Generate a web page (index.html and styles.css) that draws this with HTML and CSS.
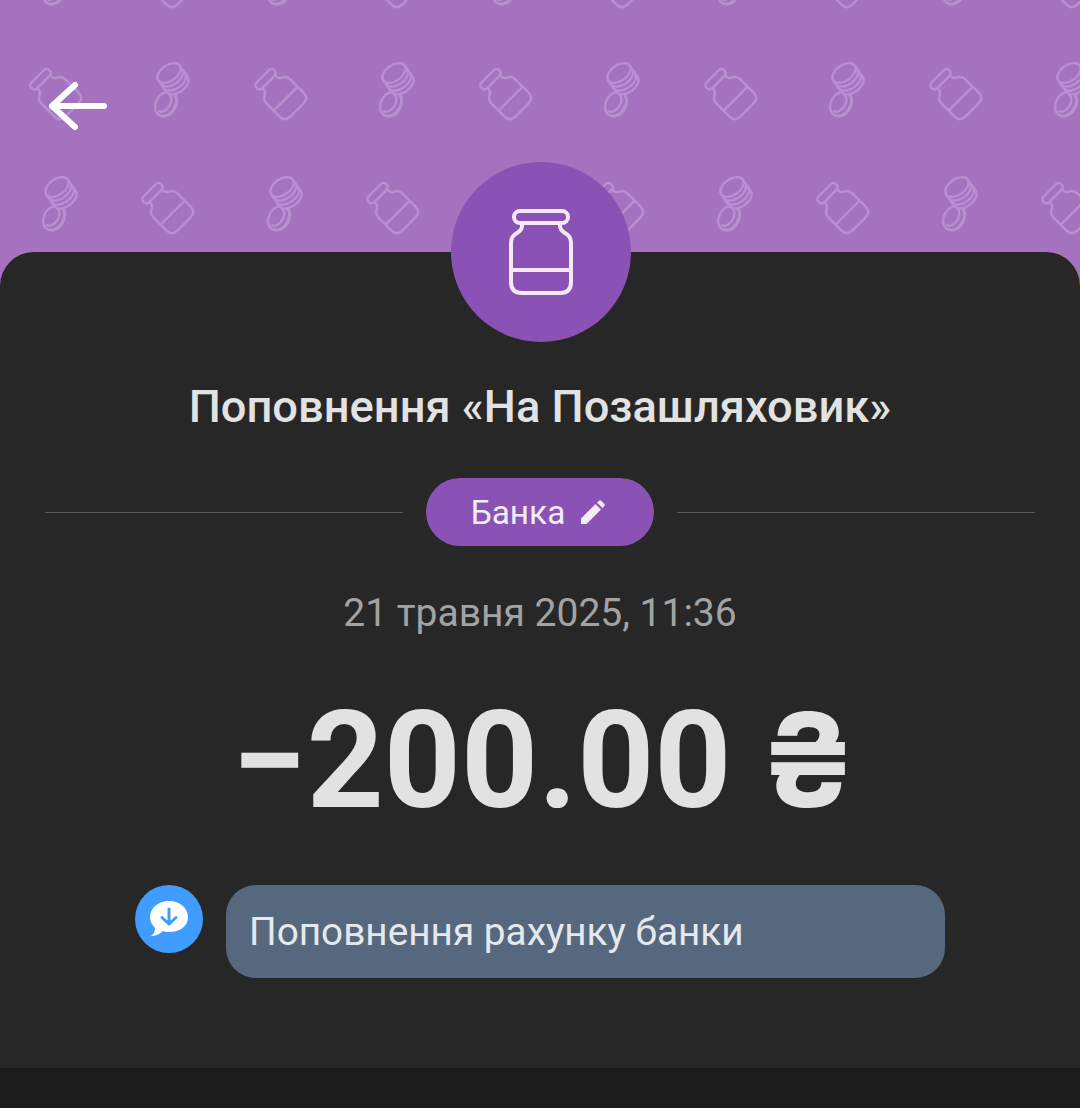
FILE: index.html
```html
<!DOCTYPE html>
<html lang="uk">
<head>
    <meta charset="UTF-8">
    <meta name="viewport" content="width=device-width, initial-scale=1.0">
    <title>Поповнення</title>
    <link rel="stylesheet" href="styles.css">
</head>
<body>
    <svg class="pattern" width="1080" height="300" aria-hidden="true">
        <defs>
            <g id="jar">
                <rect x="-13" y="-24" width="25" height="8" rx="3.5"/>
                <path d="M-9 -16 V-14 Q-9 -11 -13 -9 Q-17 -7 -17 -2 V16 Q-17 24 -9 24 H9 Q17 24 17 16 V-2 Q17 -7 13 -9 Q9 -11 9 -14 V-16"/>
                <path d="M-17 8 H17"/>
            </g>
            <g id="coins" class="coins">
                <g transform="translate(-6 11) rotate(-58)">
                    <ellipse rx="13" ry="10"/>
                    <path class="coin-line" d="M-10 -3 A10 7 0 0 0 10 -3"/>
                    <path class="coin-line" d="M-12 2 A12 7 0 0 0 12 2"/>
                </g>
                <g transform="translate(-3 -20) rotate(-35)">
                    <path d="M-13 0 V14 A13 8 0 0 0 13 14 V0"/>
                    <ellipse rx="13" ry="8"/>
                    <path class="coin-line" d="M-13 4.5 A13 8 0 0 0 13 4.5"/>
                    <path class="coin-line" d="M-13 9.5 A13 8 0 0 0 13 9.5"/>
                </g>
            </g>
            <pattern id="tile" width="225" height="226" patternUnits="userSpaceOnUse" x="0" y="-20">
                <g class="pattern-mark">
                    <use href="#jar" transform="translate(55 113) rotate(-45)"/>
                    <use href="#coins" transform="translate(172 113)"/>
                    <use href="#coins" transform="translate(60 227)"/>
                    <use href="#coins" transform="translate(60 1)"/>
                    <use href="#jar" transform="translate(167 227) rotate(-45)"/>
                    <use href="#jar" transform="translate(167 1) rotate(-45)"/>
                </g>
            </pattern>
        </defs>
        <rect width="1080" height="300" fill="url(#tile)"/>
    </svg>

    <header class="top">
        <button class="back" aria-label="Назад">
            <svg width="60" height="50" viewBox="0 0 60 50">
                <path d="M3 25 H55 M26 4 L3 25 L26 46"/>
            </svg>
        </button>
    </header>

    <main class="sheet">
        <div class="avatar">
            <svg width="70" height="92" viewBox="0 0 70 92">
                <rect x="8" y="5" width="54" height="12" rx="6"/>
                <path d="M16 17 V20 Q16 24 11 27 Q5 30 5 37 V76 Q5 87 16 87 H54 Q65 87 65 76 V37 Q65 30 59 27 Q54 24 54 20 V17"/>
                <path d="M5 64 H65"/>
            </svg>
        </div>

        <h1 class="title">Поповнення «На Позашляховик»</h1>

        <div class="category">
            <span class="line"></span>
            <div class="chip">
                <span>Банка</span>
                <svg width="24" height="24" viewBox="0 0 24 24">
                    <path d="M0 24 V18.5 L14.5 4 L20 9.5 L5.5 24 Z M16 2.5 L18 .7 Q19 -.2 20.2 .7 L23.3 3.8 Q24.2 5 23.3 6 L21.5 8 Z"/>
                </svg>
            </div>
            <span class="line"></span>
        </div>

        <div class="date">21 травня 2025, 11:36</div>

        <div class="amount">−200.00 <span class="currency">₴</span></div>

        <div class="comment">
            <div class="comment-icon">
                <svg width="40" height="38" viewBox="0 0 40 38">
                    <path class="bubble" d="M20 1 C31 1 39 8 39 17 C39 26 31 32 20 32 C18 32 16 32 14 31 C11 34 7 36 2 36 C5 34 6 31 6 28 C3 25 1 21 1 17 C1 8 9 1 20 1 Z"/>
                    <path class="arrow" d="M20 9 V24 M13 17.5 L20 24 L27 17.5"/>
                </svg>
            </div>
            <div class="comment-text">Поповнення рахунку банки</div>
        </div>
    </main>

    <div class="bottom"></div>
</body>
</html>
```

FILE: styles.css
```css
* {
    box-sizing: border-box;
}
html, body {
    margin: 0;
    height: 100%;
}
body {
    position: relative;
    display: flex;
    flex-direction: column;
    width: 1080px;
    height: 1108px;
    overflow: hidden;
    background-color: #a572bf;
    font-family: Roboto, "Noto Sans", sans-serif;
}
.pattern {
    position: absolute;
    top: 0;
    left: 0;
}
.pattern-mark {
    fill: none;
    stroke: #b88fd0;
    stroke-width: 2.4;
}
.coins {
    fill: #a572bf;
}
.coin-line {
    fill: none;
}
.top {
    position: relative;
    height: 252px;
    padding: 81px 0 0 49px;
}
.back {
    display: block;
    padding: 0;
    border: 0;
    background: none;
}
.back svg {
    display: block;
    fill: none;
    stroke: #fff;
    stroke-width: 6;
    stroke-linecap: round;
    stroke-linejoin: round;
}
.sheet {
    position: relative;
    display: flex;
    flex-direction: column;
    align-items: center;
    height: 816px;
    background-color: #272727;
    border-radius: 34px 34px 0 0;
}
.avatar {
    display: flex;
    align-items: center;
    justify-content: center;
    width: 180px;
    height: 180px;
    margin: -90px 0 0 2px;
    border-radius: 50%;
    background-color: #8a52b5;
}
.avatar svg {
    fill: none;
    stroke: #f3e9f8;
    stroke-width: 4;
}
.title {
    margin: 39px 0 0;
    font-size: 45.25px;
    line-height: 52px;
    font-weight: 500;
    color: #e2e2e2;
}
.category {
    display: flex;
    align-items: center;
    width: 990px;
    margin-top: 45px;
}
.line {
    flex: 1;
    height: 1px;
    background-color: #5a5a5a;
}
.chip {
    display: flex;
    align-items: center;
    gap: 16px;
    height: 68px;
    margin: 0 23px;
    padding: 0 49px 0 45px;
    border-radius: 34px;
    background-color: #8a52b5;
    font-size: 33.4px;
    color: #f3edf7;
}
.chip svg {
    fill: #f3edf7;
}
.date {
    margin-top: 44px;
    font-size: 39px;
    line-height: 46px;
    color: #a3a3a3;
}
.amount {
    margin: 47px 0 0 8px;
    font-size: 134.5px;
    line-height: 156px;
    font-weight: 700;
    word-spacing: -5px;
    color: #e2e2e2;
}
.currency {
    font-family: Inter, sans-serif;
    font-size: 130px;
    line-height: 1;
}
.comment {
    display: flex;
    align-items: flex-start;
    gap: 23px;
    width: 810px;
    margin-top: 46px;
}
.comment-icon {
    display: flex;
    align-items: center;
    justify-content: center;
    width: 68px;
    height: 68px;
    border-radius: 50%;
    background-color: #409cff;
}
.bubble {
    fill: #fff;
}
.arrow {
    fill: none;
    stroke: #409cff;
    stroke-width: 3;
    stroke-linecap: round;
    stroke-linejoin: round;
}
.comment-text {
    width: 719px;
    height: 93px;
    padding: 0 23px;
    border-radius: 30px;
    background-color: #56687e;
    font-size: 38.75px;
    line-height: 93px;
    color: #e4e9ef;
}
.bottom {
    position: relative;
    height: 40px;
    background-color: #1c1c1c;
}
```
